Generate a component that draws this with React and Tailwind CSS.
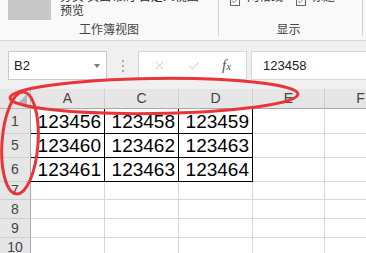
import React from "react";
import { X, Check } from "lucide-react";

const cols = ["A", "C", "D", "E", "F"];
const colW = ["w-[74px]", "w-[74px]", "w-[74px]", "w-[72px]", "w-[72px]"];

const rows = [
  { n: "1", h: "h-[25px]", vals: ["123456", "123458", "123459"] },
  { n: "5", h: "h-[24px]", vals: ["123460", "123462", "123463"] },
  { n: "6", h: "h-[24px]", vals: ["123461", "123463", "123464"] },
  { n: "7", h: "h-[18px]" },
  { n: "8", h: "h-[19px]" },
  { n: "9", h: "h-[19px]" },
  { n: "10", h: "h-[19px]" },
];

const Ribbon = () => (
  <div className="flex h-[41px] bg-[#f9f9f9] border-b border-[#d6d6d6] text-[12px] text-[#333]">
    {/* 工作簿视图 group */}
    <div className="w-[218px] flex flex-col">
      <div className="flex h-[22px] overflow-hidden">
        <div className="ml-[8px] w-[43px] h-[20px] bg-[#c8c8c8]"></div>
        <div className="ml-[9px] -mt-[10px] leading-[14px] whitespace-nowrap">
          <div>分页 页面布局 自定义视图</div>
          <div>预览</div>
        </div>
      </div>
      <div className="flex-1 flex items-center justify-center text-[#444] leading-[14px] pb-[2px]">工作簿视图</div>
    </div>
    <div className="w-px h-[36px] bg-[#d2d2d2]"></div>
    {/* 显示 group */}
    <div className="w-[143px] flex flex-col">
      <div className="flex items-start h-[22px] overflow-hidden">
        <div className="ml-[11px] -mt-[4px] w-[10px] h-[10px] border border-[#666] bg-white flex items-center justify-center">
          <Check size={8} strokeWidth={2} className="text-[#444]" />
        </div>
        <div className="ml-[7px] -mt-[10px] leading-[14px]">网格线</div>
        <div className="ml-[13px] -mt-[4px] w-[10px] h-[10px] border border-[#666] bg-white flex items-center justify-center">
          <Check size={8} strokeWidth={2} className="text-[#444]" />
        </div>
        <div className="ml-[5px] -mt-[10px] leading-[14px]">标题</div>
      </div>
      <div className="flex-1 flex items-center justify-center text-[#444] leading-[14px] pb-[2px] pr-[4px]">显示</div>
    </div>
    <div className="w-px h-[36px] bg-[#d2d2d2]"></div>
  </div>
);

const FormulaBar = () => (
  <div className="flex h-[48px] bg-[#f0f0f0] pt-[10px] text-[13px] text-[#222]">
    <div className="ml-[8px] w-[99px] h-[29px] bg-white border border-[#c9c9c9] flex items-center justify-between pl-[5px] pr-[6px]">
      <span>B2</span>
      <span className="w-0 h-0 border-l-[3px] border-r-[3px] border-t-[4px] border-l-transparent border-r-transparent border-t-[#777]"></span>
    </div>
    <div className="w-[31px] flex flex-col items-center justify-center gap-[3px] h-[29px]">
      <div className="w-[2px] h-[2px] bg-[#aaa]"></div>
      <div className="w-[2px] h-[2px] bg-[#aaa]"></div>
      <div className="w-[2px] h-[2px] bg-[#aaa]"></div>
    </div>
    <div className="w-[109px] h-[29px] bg-white border border-[#d6d6d6] flex items-center">
      <X size={13} strokeWidth={1.5} className="ml-[14px] text-[#bdbdbd]" />
      <Check size={14} strokeWidth={1.5} className="ml-[21px] text-[#bdbdbd]" />
      <span className="ml-[21px] font-['Liberation_Serif',serif] italic text-[15px] text-[#555]">
        f<span className="text-[11px]">x</span>
      </span>
    </div>
    <div className="ml-[4px] flex-1 h-[29px] bg-white border border-r-0 border-[#d6d6d6] flex items-center pl-[11px]">
      123458
    </div>
  </div>
);

const Grid = () => (
  <div className="flex flex-col">
    <div className="flex h-[20px]">
      <div className="w-[31px] shrink-0 bg-[#e6e6e6] border-r border-b border-[#b8b8b8] flex items-end justify-end pr-[3px] pb-[4px]">
        <svg width="10" height="10" viewBox="0 0 10 10">
          <polygon points="10,0 10,10 0,10" fill="#b3b3b3" />
        </svg>
      </div>
      {cols.map((c, i) => (
        <div
          key={c}
          className={`${colW[i]} shrink-0 bg-[#e6e6e6] border-r border-b border-r-[#cfcfcf] border-b-[#a9a9a9] flex items-center justify-center text-[14px] text-[#444]`}
        >
          {c}
        </div>
      ))}
    </div>
    {rows.map((r) => (
      <div key={r.n} className={`flex ${r.h}`}>
        <div className="w-[31px] shrink-0 bg-[#e6e6e6] border-r border-b border-r-[#a9a9a9] border-b-[#cfcfcf] flex items-center justify-center text-[14px] text-[#444]">
          {r.n}
        </div>
        {cols.map((c, i) => {
          const v = r.vals && i < 3 ? r.vals[i] : null;
          return (
            <div
              key={c}
              className={`${colW[i]} shrink-0 border-r border-b ${
                r.vals && i < 3 ? "border-black" : "border-[#d6d6d6]"
              } flex items-center justify-end pr-[3px] pt-[2px] text-[19px] font-light text-black`}
            >
              {v}
            </div>
          );
        })}
      </div>
    ))}
  </div>
);

export default function App() {
  return (
    <div className="relative w-[366px] h-[253px] overflow-hidden bg-white font-['Liberation_Sans','Noto_Sans_CJK_SC',sans-serif]">
      <Ribbon />
      <FormulaBar />
      <Grid />
      <svg className="absolute left-0 top-0 pointer-events-none" width="366" height="253">
        <ellipse cx="154" cy="96" rx="144" ry="17.5" transform="rotate(-0.8 154 96)" fill="none" stroke="#e8353b" strokeWidth="3" />
        <ellipse cx="20" cy="143" rx="18" ry="51" transform="rotate(4 20 143)" fill="none" stroke="#e8353b" strokeWidth="3" />
      </svg>
    </div>
  );
}
